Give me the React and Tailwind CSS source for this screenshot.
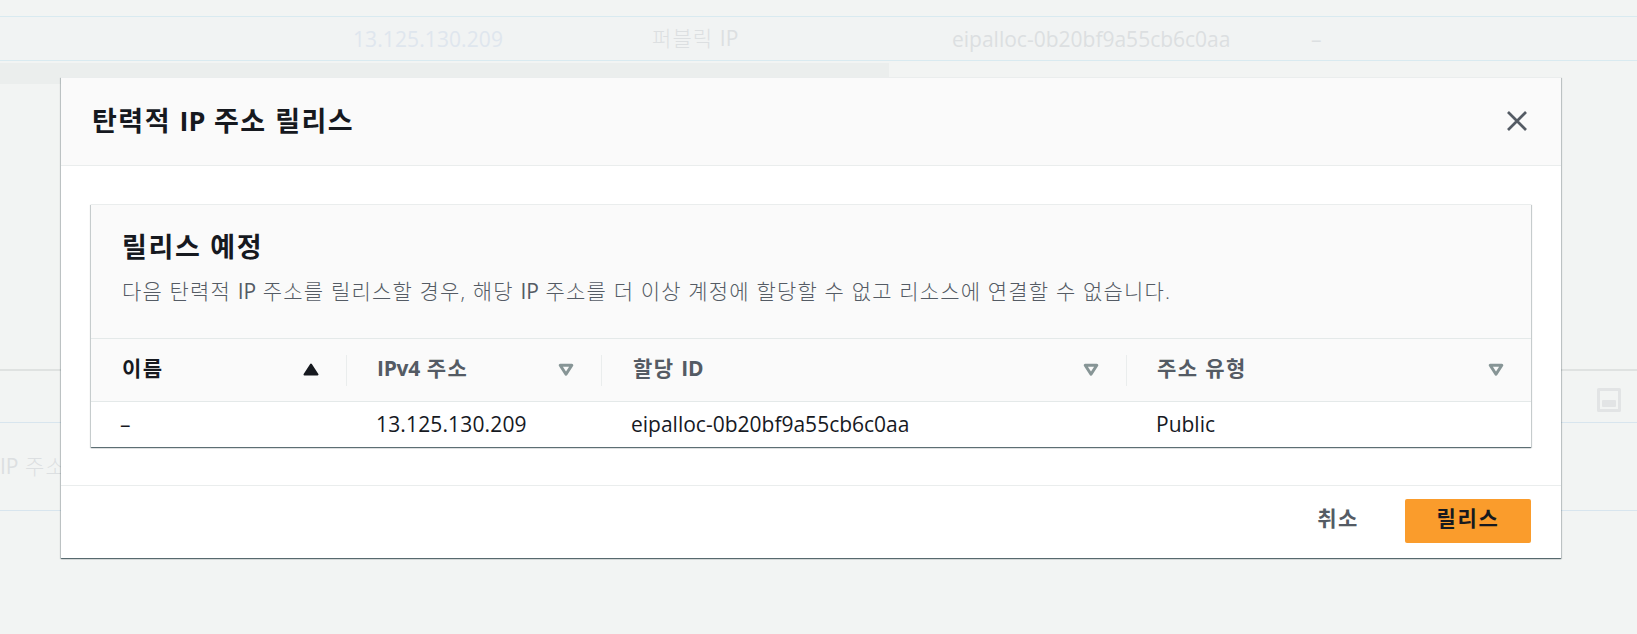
const columns = [
  { label: '이름', width: 'w-[256px]', pad: 'pl-[31px]', sorted: true },
  { label: 'IPv4 주소', width: 'w-[255px]', pad: 'pl-[30px]' },
  { label: '할당 ID', width: 'w-[525px]', pad: 'pl-[31px]' },
  { label: '주소 유형', width: 'flex-1', pad: 'pl-[30px]' },
];

const cells = [
  { text: '–', width: 'w-[256px]', pad: 'pl-[29px]' },
  { text: '13.125.130.209', width: 'w-[255px]', pad: 'pl-[29px]', tracking: 'tracking-[0.15px]' },
  { text: 'eipalloc-0b20bf9a55cb6c0aa', width: 'w-[525px]', pad: 'pl-[29px]' },
  { text: 'Public', width: 'flex-1', pad: 'pl-[29px]' },
];

// Hangul is set looser than the Latin runs beside it.
function Mixed({ children, latin = '', hangul = 'tracking-[1.1px]' }) {
  return children.split(/([A-Za-z0-9]+)/).map((run, i) => (
    <span key={i} className={i % 2 ? latin : hangul}>
      {run}
    </span>
  ));
}

function SortIcon({ sorted }) {
  return sorted ? (
    <svg width="16" height="14" viewBox="0 0 16 14">
      <path d="M8 1.5 14.5 11.5H1.5Z" fill="#16191f" stroke="#16191f" strokeWidth="2" strokeLinejoin="round" />
    </svg>
  ) : (
    <svg width="16" height="14" viewBox="0 0 16 14">
      <path d="M2.2 2.2H13.8L8 11.2Z" fill="none" stroke="#879596" strokeWidth="3" strokeLinejoin="round" />
    </svg>
  );
}

function Background() {
  return (
    <div className="flex h-[634px] flex-col text-[21px] leading-[30px] text-[#dcdfe1]">
      <div className="h-[17px] border-b border-[#d9eaf0]" />
      <div className="flex h-[44px] items-center border-b border-[#d9eaf0] bg-[#f1f3f3] pl-[353px]">
        <span className="w-[299px] tracking-[0.1px] text-[#dfe6ee]">13.125.130.209</span>
        <span className="w-[300px] pb-px font-light">
          <Mixed latin="font-normal">퍼블릭 IP</Mixed>
        </span>
        <span className="w-[359px]">eipalloc-0b20bf9a55cb6c0aa</span>
        <span>–</span>
      </div>
      <div className="mt-[2px] h-[21px] w-[889px] bg-[#ebeeed]" />
      <div className="mt-[285px] flex h-[54px] items-center justify-end border-t-2 border-b border-t-[#dfe2e1] border-b-[#d8e5ee] pr-[16px] pt-[7px]">
        <svg width="24" height="24" viewBox="0 0 24 24">
          <rect x="1.5" y="1.5" width="21" height="21" fill="none" stroke="#e2e4e5" strokeWidth="3" strokeLinejoin="round" />
          <rect x="5" y="12" width="14" height="7" rx="1" fill="#e2e4e5" />
        </svg>
      </div>
      <div className="h-[88px] border-b border-[#d8e5ee] pt-[28px] font-light">
        <Mixed latin="font-normal">IP 주소</Mixed>
      </div>
    </div>
  );
}

const shadow =
  'shadow-[0_1px_1px_0_rgba(0,28,36,0.5),1px_1px_1px_0_rgba(0,28,36,0.15),-1px_1px_1px_0_rgba(0,28,36,0.15)]';

export default function App() {
  return (
    <div className="relative h-[634px] w-full overflow-hidden bg-[#f2f4f3] font-['Open_Sans','Noto_Sans_CJK_KR',sans-serif] text-[#16191f]">
      <Background />
      <div className={`absolute top-[77px] left-[61px] flex h-[481px] w-[1500px] flex-col border-t border-[#eaeded] bg-white ${shadow}`}>
        <header className="flex h-[88px] items-center justify-between border-b border-[#eaeded] bg-[#fafafa] pr-[34px] pb-px pl-[31px]">
          <h1 className="text-[27px] font-bold">
            <Mixed hangul="tracking-[1.5px]">탄력적 IP 주소 릴리스</Mixed>
          </h1>
          <button aria-label="닫기">
            <svg width="20" height="20" viewBox="0 0 20 20">
              <path d="M1 1 19 19M19 1 1 19" stroke="#545b64" strokeWidth="2.7" />
            </svg>
          </button>
        </header>

        <main className="flex-1 px-[30px] pt-[38px]">
          <section className={`flex h-[243px] flex-col border-t border-[#eaeded] ${shadow}`}>
            <div className="h-[134px] border-b border-[#e4e9e9] bg-[#fafafa] pt-[22px] pl-[31px]">
              <h2 className="text-[27px] leading-[40px] font-bold tracking-[1.7px]">릴리스 예정</h2>
              <p className="mt-[9px] text-[21px] leading-[30px] font-light text-[#545b64]">
                <Mixed latin="font-normal" hangul="tracking-[1.17px]">
                  다음 탄력적 IP 주소를 릴리스할 경우, 해당 IP 주소를 더 이상 계정에 할당할 수 없고 리소스에 연결할 수 없습니다.
                </Mixed>
              </p>
            </div>
            <div className="flex h-[63px] items-center border-b border-[#e4e9e9] bg-[#fafafa]">
              {columns.map((c, i) => (
                <div
                  key={c.label}
                  className={`flex h-[31px] items-center justify-between pr-[27px] text-[21px] font-bold ${c.width} ${c.pad} ${
                    i < columns.length - 1 ? 'border-r border-[#eaeded]' : ''
                  } ${c.sorted ? '' : 'text-[#545b64]'}`}
                >
                  <span className="pb-[3px]">
                    <Mixed latin="tracking-[-0.3px]" hangul="tracking-[1.4px]">{c.label}</Mixed>
                  </span>
                  <SortIcon sorted={c.sorted} />
                </div>
              ))}
            </div>
            <div className="flex h-[45px] items-center text-[21px]">
              {cells.map((c) => (
                <div key={c.text} className={`${c.width} ${c.pad} ${c.tracking ?? ''}`}>
                  {c.text}
                </div>
              ))}
            </div>
          </section>
        </main>

        <footer className="flex h-[73px] items-start justify-end border-t border-[#eaeded] pt-[13px] pr-[30px] text-[21px] font-bold tracking-[1.6px]">
          <button className="mr-[46px] h-[44px] pb-[4px] text-[#545b64]">취소</button>
          <button className="h-[44px] w-[126px] rounded-[2px] bg-[#fa9c2c] pb-[4px]">릴리스</button>
        </footer>
      </div>
    </div>
  );
}
